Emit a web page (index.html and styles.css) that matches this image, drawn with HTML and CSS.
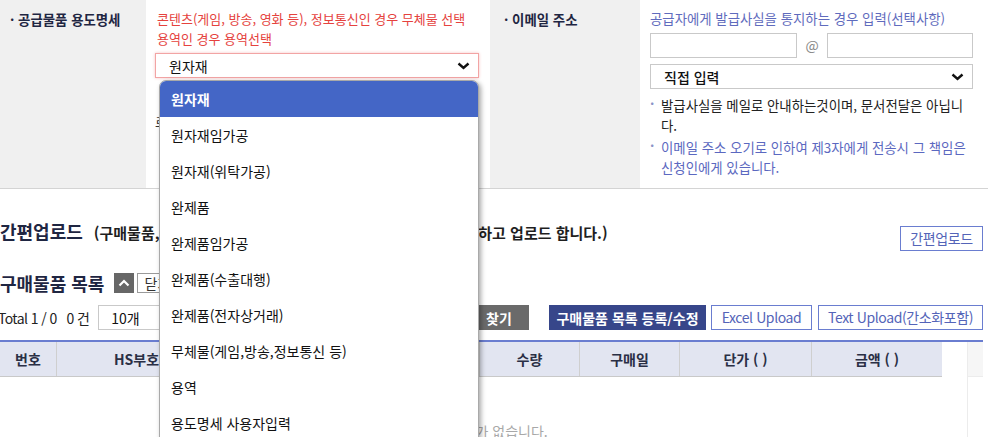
FILE: index.html
```html
<!DOCTYPE html>
<html lang="ko">
<head>
<meta charset="utf-8">
<title>구매확인서 신청</title>
<link rel="stylesheet" href="styles.css">
</head>
<body>
<div class="page">
  <div class="form-row">
    <div class="th">· 공급물품 용도명세</div>
    <div class="td td-use">
      <p class="warn">콘텐츠(게임, 방송, 영화 등), 정보통신인 경우 무체물 선택<br>용역인 경우 용역선택</p>
      <div class="select focus">
        <span>원자재</span>
        <svg class="chev" width="13" height="8" viewBox="0 0 13 8"><polyline points="1.5,1.5 6.5,6 11.5,1.5" fill="none" stroke="#111" stroke-width="2.4"/></svg>
      </div>
      <p class="under-note">로 용도명세를 직접 입력하는 경우 사용자입력을 선택합니다.</p>
    </div>
    <div class="th">· 이메일 주소</div>
    <div class="td td-mail">
      <p class="hint">공급자에게 발급사실을 통지하는 경우 입력(선택사항)</p>
      <div class="mail-inputs">
        <div class="input"></div>
        <span class="at">@</span>
        <div class="input"></div>
      </div>
      <div class="select mail-select">
        <span>직접 입력</span>
        <svg class="chev" width="13" height="8" viewBox="0 0 13 8"><polyline points="1.5,1.5 6.5,6 11.5,1.5" fill="none" stroke="#111" stroke-width="2.4"/></svg>
      </div>
      <ul class="notes">
        <li>발급사실을 메일로 안내하는것이며, 문서전달은 아닙니다.</li>
        <li class="blue">이메일 주소 오기로 인하여 제3자에게 전송시 그 책임은 신청인에게 있습니다.</li>
      </ul>
    </div>
  </div>

  <section class="upload">
    <div class="title-row">
      <h2 class="title">간편업로드 <small>(구매물품, 수량, 단가 등을 엑셀 양식에 맞추도록 작성 후 저장하고 업로드 합니다.)</small></h2>
      <button class="btn-outline">간편업로드</button>
    </div>

    <div class="list-head">
      <h3 class="title">구매물품 목록</h3>
      <span class="toggle">
        <svg width="12" height="8" viewBox="0 0 12 8"><polyline points="1.5,6.5 6,2 10.5,6.5" fill="none" stroke="#fff" stroke-width="2.2"/></svg>
      </span>
      <span class="btn-small">닫기</span>
    </div>

    <div class="toolbar">
      <span class="total">Total 1 / 0 &nbsp; 0 건</span>
      <div class="select small-select">
        <span>10개</span>
        <svg class="chev" width="12" height="8" viewBox="0 0 12 8"><polyline points="1.5,1.5 6,6 10.5,1.5" fill="none" stroke="#111" stroke-width="2.2"/></svg>
      </div>
      <div class="actions">
        <button class="btn-gray">찾기</button>
        <button class="btn-navy">구매물품 목록 등록/수정</button>
        <button class="btn-outline btn-excel">Excel Upload</button>
        <button class="btn-outline btn-text">Text Upload(간소화포함)</button>
      </div>
    </div>

    <div class="grid-wrap">
      <div class="grid">
        <div class="ghead">
          <div class="c c1">번호</div>
          <div class="c c2">HS부호</div>
          <div class="c c3">품명</div>
          <div class="c c4">수량</div>
          <div class="c c5">구매일</div>
          <div class="c c6">단가 ( )</div>
          <div class="c c7">금액 ( )</div>
        </div>
        <div class="gbody">조회된 데이터가 없습니다.</div>
      </div>
      <div class="gap"></div>
      <div class="vscroll"><div class="vscroll-head"></div></div>
    </div>
  </section>

  <ul class="dropdown">
    <li class="sel">원자재</li>
    <li>원자재임가공</li>
    <li>원자재(위탁가공)</li>
    <li>완제품</li>
    <li>완제품임가공</li>
    <li>완제품(수출대행)</li>
    <li>완제품(전자상거래)</li>
    <li>무체물(게임,방송,정보통신 등)</li>
    <li>용역</li>
    <li>용도명세 사용자입력</li>
  </ul>
</div>
</body>
</html>
```

FILE: styles.css
```css
* { box-sizing: border-box; }
html, body {
  margin: 0;
  padding: 0;
  overflow: hidden;
  background: #fff;
}
body {
  font-family: "Noto Sans CJK KR", "Noto Sans", sans-serif;
  font-size: 14px;
  color: #222;
}
p, ul, h2, h3 { margin: 0; padding: 0; }
button { font-family: inherit; }

.page {
  position: relative;
  width: 988px;
  height: 437px;
}

/* ---------- form row ---------- */
.form-row {
  display: grid;
  grid-template-columns: 146px 344px 150px 348px;
  height: 189px;
  border-bottom: 1px solid #d4d4d4;
  font-size: 13px;
}
.th {
  background: #f0f0f0;
  padding: 9px 0 0 10px;
  line-height: 20px;
  font-weight: 700;
  color: #1f2642;
  font-size: 13.4px;
}
.th + .td + .th { padding-left: 14px; }
.td { background: #fff; }

.td-use { padding: 9px 11px 0 9px; }
.warn {
  color: #e5423d;
  line-height: 20px;
  padding-left: 2px;
  white-space: nowrap;
}
.select {
  display: flex;
  align-items: center;
  justify-content: space-between;
  height: 25px;
  border: 1px solid #c9c9c9;
  background: #fff;
  padding: 0 8px 0 13px;
  color: #111;
  font-size: 14px;
}
.select.focus {
  margin-top: 4px;
  border-color: #f2a4a4;
  box-shadow: 0 0 3px #f6c4c4;
}
.chev { flex: none; }
.under-note {
  margin-top: 34px;
  line-height: 20px;
  color: #333;
  white-space: nowrap;
  overflow: hidden;
}

.td-mail { padding: 8px 10px 0 10px; }
.hint { color: #5f6bbd; line-height: 20px; white-space: nowrap; font-size: 13.4px; }
.mail-inputs {
  display: grid;
  grid-template-columns: 147px 30px 146px;
  margin-top: 5px;
  height: 25px;
}
.input { border: 1px solid #c9c9c9; background: #fff; }
.at {
  text-align: center;
  color: #888;
  line-height: 25px;
  font-size: 14px;
}
.mail-select {
  margin-top: 6px;
  width: 323px;
  font-weight: 500;
}
.notes {
  list-style: none;
  margin-top: 6px;
  width: 320px;
  font-size: 13.4px;
}
.notes li {
  position: relative;
  padding-left: 11px;
  line-height: 20px;
  color: #222;
}
.notes li::before {
  content: "·";
  position: absolute;
  left: 0;
  top: -2px;
  color: #8a93c7;
  font-weight: 700;
}
.notes li.blue { color: #5b68c0; margin-top: 2px; }

/* ---------- upload ---------- */
.upload { padding: 0 5px 0 0; }
.title-row {
  display: flex;
  justify-content: space-between;
  align-items: flex-start;
  padding-top: 30px;
}
.title {
  font-size: 18px;
  line-height: 24px;
  font-weight: 700;
  color: #1f2642;
  white-space: nowrap;
}
.title small {
  font-size: 15px;
  margin-left: 6px;
  color: #1f1f1f;
}
.title-row .btn-outline { margin-top: 7px; width: 83px; }

.btn-outline {
  height: 25px;
  border: 1px solid #6a7dd0;
  background: #fff;
  color: #5464b8;
  font-size: 14px;
  padding: 0;
  line-height: 23px;
  white-space: nowrap;
  letter-spacing: -0.4px;
}
.list-head {
  display: flex;
  align-items: center;
  margin-top: 20px;
  height: 24px;
}
.toggle {
  width: 20px;
  height: 20px;
  margin-left: 10px;
  background: #676767;
  display: flex;
  align-items: center;
  justify-content: center;
}
.btn-small {
  margin-left: 3px;
  height: 20px;
  border: 1px solid #9a9a9a;
  padding: 0 6px;
  line-height: 18px;
  font-size: 14px;
  color: #333;
}

.toolbar {
  display: flex;
  align-items: center;
  margin-top: 10px;
  height: 25px;
}
.total {
  letter-spacing: -0.6px;
  color: #222;
  margin-left: -2px;
}
.small-select {
  margin-left: 9px;
  width: 90px;
  padding: 0 10px 0 12px;
}
.actions {
  margin-left: auto;
  display: flex;
  gap: 5px;
}
.btn-gray {
  height: 25px;
  width: 60px;
  margin-right: 15px;
  border: 0;
  background: #6a6a6a;
  color: #fff;
  font-weight: 700;
  font-size: 14px;
}
.btn-navy {
  height: 25px;
  width: 157px;
  border: 0;
  background: #37468a;
  color: #fff;
  font-weight: 700;
  font-size: 14px;
  white-space: nowrap;
  padding: 0;
}
.btn-excel { width: 101px; }
.btn-text { width: 165px; margin-left: 1px; }

.grid-wrap {
  display: flex;
  margin-top: 10px;
  border-top: 2px solid #6a7dd0;
  height: 120px;
}
.grid { width: 942px; }
.ghead {
  display: flex;
  height: 35px;
  background: #e2e5f1;
  border-bottom: 1px solid #c9c9c9;
}
.c {
  display: flex;
  align-items: center;
  justify-content: center;
  font-weight: 700;
  color: #2a2f45;
  border-right: 1px solid #cfcfcf;
}
.c1 { width: 57px; }
.c2 { width: 160px; }
.c3 { width: 263px; }
.c4 { width: 100px; }
.c5 { width: 100px; }
.c6 { width: 132px; }
.c7 { width: 130px; border-right: 0; }
.gbody {
  padding-top: 44px;
  text-align: center;
  color: #a8a8a8;
  line-height: 20px;
}
.gap { width: 25px; }
.vscroll {
  width: 16px;
  border-left: 1px solid #ececec;
}
.vscroll-head { height: 35px; background: #f6f6f6; border-bottom: 1px solid #ececec; }

/* ---------- dropdown (open select list) ---------- */
.dropdown {
  position: absolute;
  left: 159px;
  top: 80px;
  width: 320px;
  height: 380px;
  margin: 0;
  padding: 0;
  list-style: none;
  background: #fff;
  border: 1px solid #a9a9a9;
  border-radius: 7px 7px 0 0;
  box-shadow: 2px 2px 5px rgba(0, 0, 0, 0.35);
  overflow: hidden;
}
.dropdown li {
  height: 36px;
  line-height: 36px;
  padding-left: 11px;
  color: #111;
}
.dropdown li.sel {
  background: #4466c6;
  color: #fff;
  font-weight: 700;
}
```
